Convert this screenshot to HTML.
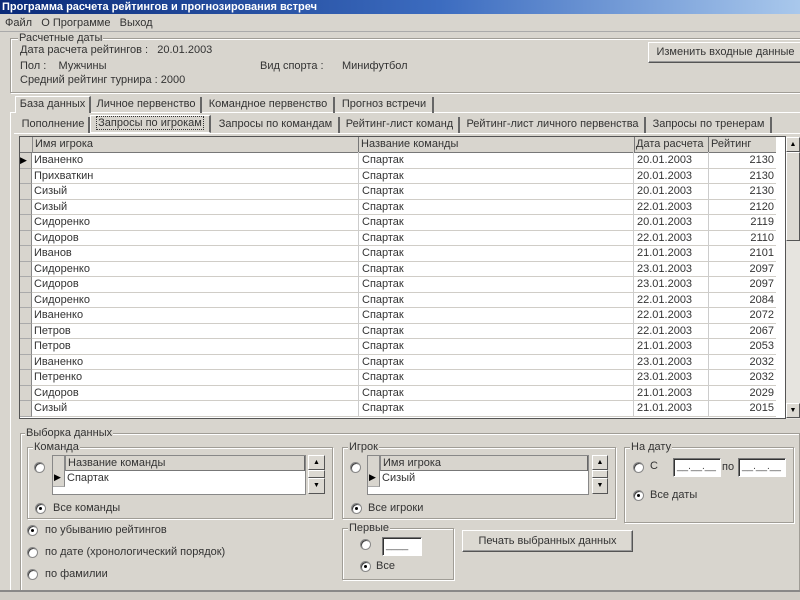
<!DOCTYPE html>
<html><head><meta charset="utf-8"><style>
*{margin:0;padding:0;box-sizing:border-box}
body{width:800px;height:600px;overflow:hidden;background:#d8d5ce;font-family:"Liberation Sans",sans-serif;font-size:11px;color:#333;position:relative}
.a{position:absolute;white-space:nowrap}
.grp{position:absolute;border:1px solid #a09d96;box-shadow:1px 1px 0 #fff inset,1px 1px 0 #fff}
.lbl{position:absolute;background:#d8d5ce;padding:0 1px;line-height:12px}
.btn{position:absolute;background:#dcd9d2;border:1px solid;border-color:#fff #555 #555 #fff;box-shadow:inset -1px -1px 0 #999;text-align:center}
.tab{position:absolute;height:16px;line-height:15px;text-align:center;border-right:2px solid #666;}
.radio{position:absolute;width:11px;height:11px;border-radius:50%;background:#fff;border:1px solid #888;box-shadow:inset 1px 1px 0 #444}
.radio.on::after{content:"";position:absolute;left:3px;top:3px;width:3px;height:3px;border-radius:50%;background:#000}
.grid{position:absolute;background:#fff;border:1px solid #555}
.row{position:absolute;left:0;height:16px;border-bottom:1px solid #cfccc6;line-height:15px}
.row span{position:absolute;top:0}
.ind{position:absolute;left:0;width:12px;background:#d8d5ce;border-right:1px solid #888;border-bottom:1px solid #aaa}
.sb{position:absolute;background:#dcd9d2;border:1px solid;border-color:#fff #555 #555 #fff;font-size:7px;text-align:center;line-height:13px;color:#000}
.inp{position:absolute;background:#fff;border:1px solid;border-color:#777 #fff #fff #777;box-shadow:inset 1px 1px 0 #333;font-size:10px;color:#444;padding-left:3px;line-height:16px}
</style></head><body>
<div class="a" style="left:0;top:0;width:800px;height:14px;background:linear-gradient(90deg,#0a2a78,#3c6cc0 55%,#a9c8ec);color:#fff;font-weight:bold;line-height:14px;padding-left:2px">Программа расчета рейтингов и прогнозирования встреч</div>
<div class="a" style="left:5px;top:16px;line-height:14px">Файл&nbsp;&nbsp; О Программе&nbsp;&nbsp; Выход</div>
<div class="a" style="left:0;top:31px;width:800px;height:1px;background:#aaa"></div>

<div class="grp" style="left:10px;top:38px;width:800px;height:55px"></div>
<div class="lbl" style="left:18px;top:32px">Расчетные даты</div>
<div class="a" style="left:20px;top:44px">Дата расчета рейтингов :&nbsp;&nbsp; 20.01.2003</div>
<div class="a" style="left:20px;top:60px">Пол :&nbsp;&nbsp;&nbsp; Мужчины</div>
<div class="a" style="left:260px;top:60px">Вид спорта :</div>
<div class="a" style="left:342px;top:60px">Минифутбол</div>
<div class="a" style="left:20px;top:74px">Средний рейтинг турнира : 2000</div>
<div class="btn" style="left:648px;top:42px;width:155px;height:21px;line-height:19px">Изменить входные данные</div>

<div class="a" style="left:10px;top:112px;width:790px;height:484px;border:1px solid #fff;border-right:none;box-shadow:inset 0 -2px 0 #666"></div>
<div class="tab" style="left:15px;top:96px;width:76px;border:1px solid #fff;border-right:2px solid #666;border-bottom:none;background:#d8d5ce;height:17px">База данных</div>
<div class="tab" style="left:92px;top:97px;width:110px">Личное первенство</div>
<div class="tab" style="left:203px;top:97px;width:132px">Командное первенство</div>
<div class="tab" style="left:336px;top:97px;width:98px">Прогноз встречи</div>

<div class="a" style="left:14px;top:133px;width:786px;height:1px;background:#fff"></div>
<div class="tab" style="left:18px;top:117px;width:72px">Пополнение</div>
<div class="tab" style="left:90px;top:115px;width:121px;border:1px solid #fff;border-right:2px solid #666;height:18px"><span style="outline:1px dotted #333;padding:0 1px">Запросы по игрокам</span></div>
<div class="tab" style="left:213px;top:117px;width:127px">Запросы по командам</div>
<div class="tab" style="left:341px;top:117px;width:119px">Рейтинг-лист команд</div>
<div class="tab" style="left:461px;top:117px;width:185px">Рейтинг-лист личного первенства</div>
<div class="tab" style="left:647px;top:117px;width:125px">Запросы по тренерам</div>

<div class="grid" style="left:19px;top:136px;width:767px;height:283px;overflow:hidden">
<div class="row" style="top:0;width:756px;height:16px;background:#d8d5ce;border-bottom:1px solid #777">
<span style="left:12px;width:327px;height:16px;border-left:1px solid #888;border-right:1px solid #777;padding-left:2px">Имя игрока</span>
<span style="left:339px;width:276px;height:16px;border-right:1px solid #777;padding-left:2px">Название команды</span>
<span style="left:614px;width:75px;height:16px;border-right:1px solid #777;padding-left:2px">Дата расчета</span>
<span style="left:689px;padding-left:2px">Рейтинг</span></div>
</div>
<div id="rows"></div>
<div class="a" style="left:786px;top:137px;width:14px;height:282px;background:#e6e4df"></div>
<div class="sb" style="left:786px;top:137px;width:14px;height:15px">▲</div>
<div class="sb" style="left:786px;top:152px;width:14px;height:89px"></div>
<div class="sb" style="left:786px;top:403px;width:14px;height:15px">▼</div>

<div class="grp" style="left:20px;top:433px;width:780px;height:158px"></div>
<div class="lbl" style="left:25px;top:427px">Выборка данных</div>

<div class="grp" style="left:27px;top:447px;width:306px;height:72px"></div>
<div class="lbl" style="left:33px;top:441px">Команда</div>
<div class="radio" style="left:34px;top:462px"></div>
<div class="grid" style="left:52px;top:455px;width:254px;height:40px;border-color:#888">
<div class="a" style="left:0;top:0;width:252px;height:15px;background:#d8d5ce;border-bottom:1px solid #777;line-height:14px"><span class="a" style="left:12px;top:0;height:15px;border-left:1px solid #888;padding-left:2px;width:240px;border-right:1px solid #666">Название команды</span></div>
<div class="ind" style="top:0;height:31px"></div>
<div class="a" style="left:1px;top:16px;font-size:9px;color:#000">▶</div>
<div class="a" style="left:14px;top:15px;line-height:15px">Спартак</div>
</div>
<div class="a" style="left:308px;top:455px;width:17px;height:39px;background:#e6e4df"></div>
<div class="sb" style="left:308px;top:455px;width:17px;height:15px">▲</div>
<div class="sb" style="left:308px;top:470px;width:17px;height:8px"></div>
<div class="sb" style="left:308px;top:478px;width:17px;height:16px">▼</div>
<div class="radio on" style="left:35px;top:503px"></div>
<div class="a" style="left:53px;top:502px">Все команды</div>

<div class="grp" style="left:342px;top:447px;width:274px;height:72px"></div>
<div class="lbl" style="left:348px;top:441px">Игрок</div>
<div class="radio" style="left:350px;top:462px"></div>
<div class="grid" style="left:367px;top:455px;width:222px;height:40px;border-color:#888">
<div class="a" style="left:0;top:0;width:220px;height:15px;background:#d8d5ce;border-bottom:1px solid #777;line-height:14px"><span class="a" style="left:12px;top:0;height:15px;border-left:1px solid #888;padding-left:2px;width:208px;border-right:1px solid #666">Имя игрока</span></div>
<div class="ind" style="top:0;height:31px"></div>
<div class="a" style="left:1px;top:16px;font-size:9px;color:#000">▶</div>
<div class="a" style="left:14px;top:15px;line-height:15px">Сизый</div>
</div>
<div class="a" style="left:592px;top:455px;width:16px;height:39px;background:#e6e4df"></div>
<div class="sb" style="left:592px;top:455px;width:16px;height:15px">▲</div>
<div class="sb" style="left:592px;top:470px;width:16px;height:8px"></div>
<div class="sb" style="left:592px;top:478px;width:16px;height:16px">▼</div>
<div class="radio on" style="left:351px;top:503px"></div>
<div class="a" style="left:368px;top:502px">Все игроки</div>

<div class="grp" style="left:624px;top:447px;width:170px;height:76px"></div>
<div class="lbl" style="left:630px;top:441px">На дату</div>
<div class="radio" style="left:633px;top:462px"></div>
<div class="a" style="left:650px;top:460px">С</div>
<div class="inp" style="left:673px;top:458px;width:48px;height:19px">__.__.__</div>
<div class="a" style="left:722px;top:461px">по</div>
<div class="inp" style="left:738px;top:458px;width:48px;height:19px">__.__.__</div>
<div class="radio on" style="left:633px;top:490px"></div>
<div class="a" style="left:650px;top:489px">Все даты</div>

<div class="radio on" style="left:27px;top:525px"></div>
<div class="a" style="left:45px;top:524px">по убыванию рейтингов</div>
<div class="radio" style="left:27px;top:547px"></div>
<div class="a" style="left:45px;top:546px">по дате (хронологический порядок)</div>
<div class="radio" style="left:27px;top:569px"></div>
<div class="a" style="left:45px;top:568px">по фамилии</div>

<div class="grp" style="left:342px;top:528px;width:112px;height:52px"></div>
<div class="lbl" style="left:348px;top:522px">Первые</div>
<div class="radio" style="left:360px;top:539px"></div>
<div class="inp" style="left:382px;top:537px;width:40px;height:19px">____</div>
<div class="radio on" style="left:360px;top:561px"></div>
<div class="a" style="left:376px;top:560px">Все</div>
<div class="btn" style="left:462px;top:530px;width:171px;height:22px;line-height:20px">Печать выбранных данных</div>

<div class="a" style="left:0;top:590px;width:800px;height:10px;border-top:2px solid #888;background:#d0cdc6"></div>

<script>
var d=[["Иваненко","20.01.2003","2130"],["Прихваткин","20.01.2003","2130"],["Сизый","20.01.2003","2130"],["Сизый","22.01.2003","2120"],["Сидоренко","20.01.2003","2119"],["Сидоров","22.01.2003","2110"],["Иванов","21.01.2003","2101"],["Сидоренко","23.01.2003","2097"],["Сидоров","23.01.2003","2097"],["Сидоренко","22.01.2003","2084"],["Иваненко","22.01.2003","2072"],["Петров","22.01.2003","2067"],["Петров","21.01.2003","2053"],["Иваненко","23.01.2003","2032"],["Петренко","23.01.2003","2032"],["Сидоров","21.01.2003","2029"],["Сизый","21.01.2003","2015"]];
var h="";d.forEach(function(r,i){var t=153+i*15.5;
h+='<div class="a" style="left:20px;top:'+t+'px;width:756px;height:15.5px;border-bottom:1px solid #d0cdc7;line-height:15px;color:#333">'+
'<div class="a" style="left:0;top:0;width:12px;height:15.5px;background:#d8d5ce;border-right:1px solid #888;border-bottom:1px solid #aaa;font-size:9px;color:#000;line-height:15px">'+(i==0?'▶':'')+'</div>'+
'<span class="a" style="left:14px">'+r[0]+'</span>'+
'<span class="a" style="left:338px;top:-1px;height:16px;border-left:1px solid #ccc"></span>'+
'<span class="a" style="left:342px">Спартак</span>'+
'<span class="a" style="left:613px;top:-1px;height:16px;border-left:1px solid #ccc"></span>'+
'<span class="a" style="left:617px">'+r[1]+'</span>'+
'<span class="a" style="left:688px;top:-1px;height:16px;border-left:1px solid #ccc"></span>'+
'<span class="a" style="left:690px;width:64px;text-align:right">'+r[2]+'</span></div>';});
document.getElementById("rows").innerHTML=h;
</script>
</body></html>
